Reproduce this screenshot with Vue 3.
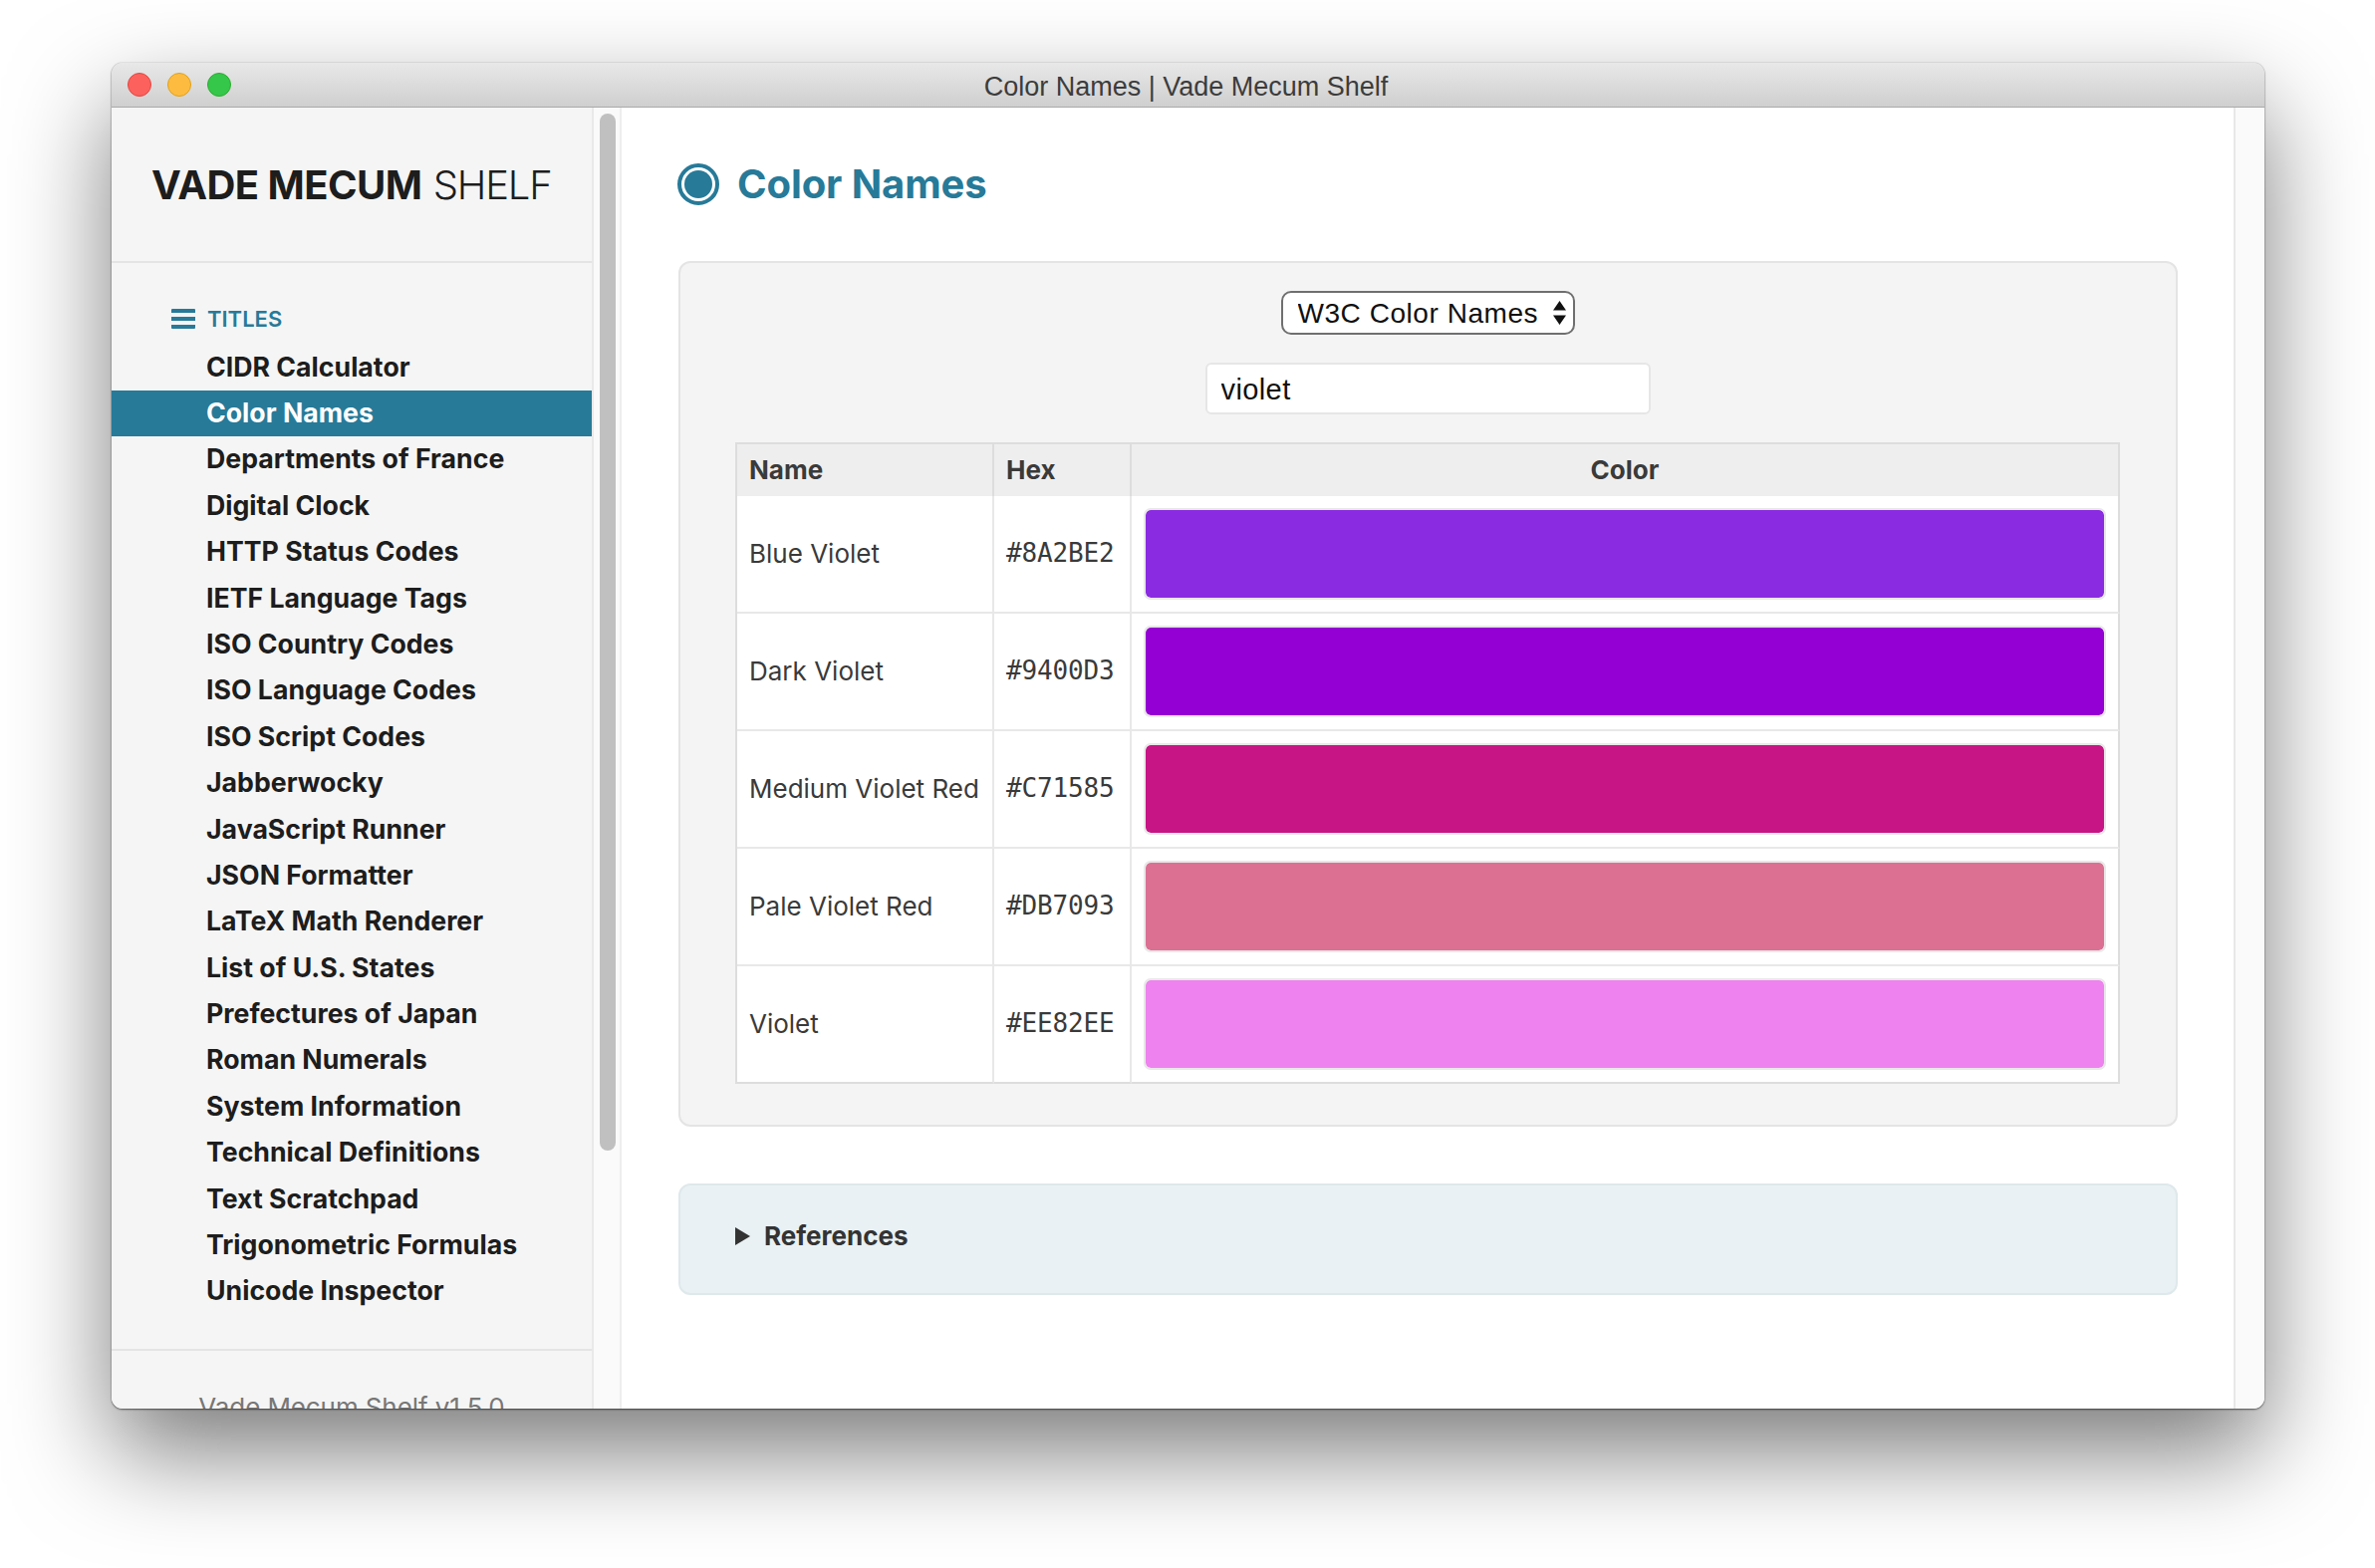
<script setup>
const titles = ['CIDR Calculator','Color Names','Departments of France','Digital Clock','HTTP Status Codes','IETF Language Tags','ISO Country Codes','ISO Language Codes','ISO Script Codes','Jabberwocky','JavaScript Runner','JSON Formatter','LaTeX Math Renderer','List of U.S. States','Prefectures of Japan','Roman Numerals','System Information','Technical Definitions','Text Scratchpad','Trigonometric Formulas','Unicode Inspector']
const colors = [
  { name: 'Blue Violet', hex: '#8A2BE2' },
  { name: 'Dark Violet', hex: '#9400D3' },
  { name: 'Medium Violet Red', hex: '#C71585' },
  { name: 'Pale Violet Red', hex: '#DB7093' },
  { name: 'Violet', hex: '#EE82EE' }
]
</script>

<template>
  <div class="page">
    <div class="window">
      <header class="titlebar">
        <div class="lights">
          <span class="light red"></span>
          <span class="light yellow"></span>
          <span class="light green"></span>
        </div>
        <div class="wintitle">Color Names | Vade Mecum Shelf</div>
      </header>
      <div class="body">
        <aside class="sidebar">
          <div class="logo"><b>VADE MECUM</b> <span>SHELF</span></div>
          <nav class="nav">
            <div class="navhead">
              <svg class="menuicon" width="24" height="20" viewBox="0 0 24 20"><path d="M0 1a1 1 0 0 1 1-1h22a1 1 0 0 1 1 1v3H0zM0 8h24v4H0zM0 16h24v3a1 1 0 0 1-1 1H1a1 1 0 0 1-1-1z" fill="#277a98"/></svg>
              <span>TITLES</span>
            </div>
            <a v-for="t in titles" :key="t" class="navitem" :class="{ active: t === 'Color Names' }">{{ t }}</a>
          </nav>
          <div class="sidefoot">Vade Mecum Shelf v1.5.0</div>
        </aside>
        <div class="gutter"><div class="thumb"></div></div>
        <main class="main">
          <h1 class="heading">
            <span class="radio"><span class="dot"></span></span>
            Color Names
          </h1>
          <section class="panel">
            <div class="selectwrap">
              <select class="select"><option>W3C Color Names</option></select>
              <svg class="arrows" width="13" height="24" viewBox="0 0 13 24"><path d="M6.5 0l6.5 9.5H0zM6.5 24L0 14.5h13z" fill="#111"/></svg>
            </div>
            <input class="search" value="violet" />
            <table class="table">
              <colgroup><col class="c1" /><col class="c2" /><col /></colgroup>
              <thead>
                <tr><th>Name</th><th>Hex</th><th class="center">Color</th></tr>
              </thead>
              <tbody>
                <tr v-for="c in colors" :key="c.hex">
                  <td>{{ c.name }}</td>
                  <td class="mono">{{ c.hex }}</td>
                  <td class="swatchcell"><div class="swatch" :style="{ backgroundColor: c.hex }"></div></td>
                </tr>
              </tbody>
            </table>
          </section>
          <section class="refs">
            <span class="tri"></span>
            <span class="refstext">References</span>
          </section>
        </main>
        <div class="rightgutter"></div>
      </div>
    </div>
  </div>
</template>

<style>
html, body { margin: 0; background: #fff; overflow: hidden; }
</style>

<style scoped>
.page {
  width: 2384px;
  height: 1574px;
  padding: 63px 111px 160px 112px;
  box-sizing: border-box;
  background: #fff;
  overflow: hidden;
}
.window {
  height: 1351px;
  display: flex;
  flex-direction: column;
  border-radius: 11px;
  overflow: hidden;
  background: #fff;
  box-shadow: 0 44px 100px rgba(0,0,0,.52), 0 1px 2px rgba(0,0,0,.55), 0 0 1px rgba(0,0,0,.45);
  font-family: Inter, "Liberation Sans", sans-serif;
}
.titlebar {
  flex: none;
  height: 45px;
  box-sizing: border-box;
  display: flex;
  align-items: center;
  position: relative;
  background: linear-gradient(#e8e8e8, #cfcfcf);
  border-bottom: 1px solid #a9a9a9;
}
.lights { display: flex; gap: 16px; padding-left: 16px; }
.light { width: 24px; height: 24px; border-radius: 50%; box-sizing: border-box; }
.red { background: #fc615d; border: 1px solid #e2463f; }
.yellow { background: #fdbc40; border: 1px solid #e1a116; }
.green { background: #34c749; border: 1px solid #2dac2f; }
.wintitle {
  position: absolute;
  left: 0; right: 4px; top: 0; bottom: 0;
  display: flex; align-items: center; justify-content: center;
  font: 27px "Liberation Sans", sans-serif;
  color: #3c3c3c;
  padding-top: 4px;
  box-sizing: border-box;
}
.body { flex: 1; display: flex; min-height: 0; }
.sidebar {
  flex: none;
  width: 484px;
  box-sizing: border-box;
  background: #f5f5f5;
  border-right: 2px solid #e9e9e9;
  overflow: hidden;
}
.logo {
  height: 156px;
  box-sizing: border-box;
  border-bottom: 2px solid #e4e4e4;
  padding-left: 40px;
  padding-top: 50px;
  font-size: 40px;
  line-height: 56px;
  color: #1d1d1d;
  white-space: nowrap;
}
.logo b { font-weight: 700; letter-spacing: -.55px; }
.logo span { font-weight: 300; letter-spacing: -1.2px; }
.nav { padding: 33px 0 34px; border-bottom: 2px solid #e4e4e4; }
.navhead {
  height: 48.6px;
  box-sizing: border-box;
  padding-left: 60px;
  padding-bottom: 2px;
  display: flex;
  align-items: center;
  gap: 12px;
  font-size: 22px;
  font-weight: 600;
  color: #277a98;
}
.navitem {
  display: block;
  height: 46.4px;
  line-height: 44px;
  padding-left: 95px;
  font-size: 26.7px;
  font-weight: 650;
  color: #1d1d1d;
}
.navitem.active { background: #277a98; color: #fff; }
.sidefoot {
  padding-top: 40px;
  text-align: center;
  font-size: 26px;
  letter-spacing: -.1px;
  line-height: 33px;
  color: #777;
  white-space: nowrap;
}
.gutter {
  flex: none;
  width: 28px;
  box-sizing: border-box;
  background: #fafafa;
  border-right: 2px solid #eee;
  padding: 6px 0 0 6px;
}
.thumb { width: 16px; height: 1041px; border-radius: 8px; background: #c0c0c0; }
.main {
  flex: 1;
  min-width: 0;
  box-sizing: border-box;
  padding: 0 56px 0 57px;
  background: #fff;
}
.heading {
  margin: 0 0 0 -1px;
  height: 154px;
  box-sizing: border-box;
  padding-top: 56px;
  display: flex;
  align-items: flex-start;
  gap: 18px;
  font-size: 40px;
  line-height: 42px;
  font-weight: 650;
  letter-spacing: -.1px;
  color: #277a98;
}
.radio {
  width: 42px; height: 42px;
  box-sizing: border-box;
  border: 4px solid #277a98;
  border-radius: 50%;
  display: flex; align-items: center; justify-content: center;
}
.dot { width: 28px; height: 28px; border-radius: 50%; background: #277a98; }
.panel {
  box-sizing: border-box;
  height: 869px;
  background: #f4f4f4;
  border: 2px solid #e4e4e4;
  border-radius: 12px;
  padding: 28px 56px 0 55px;
  display: flex;
  flex-direction: column;
  align-items: center;
}
.selectwrap { position: relative; width: 295px; height: 44px; flex: none; }
.select {
  appearance: none;
  -webkit-appearance: none;
  display: block;
  width: 100%;
  height: 100%;
  box-sizing: border-box;
  background: #fff;
  border: 2px solid #6f6f6f;
  border-radius: 10px;
  padding: 0 0 0 15px;
  font: 28px "Liberation Sans", sans-serif;
  letter-spacing: .55px;
  color: #111;
  outline: none;
}
.arrows { position: absolute; right: 9px; top: 10px; }
.search {
  flex: none;
  margin-top: 28px;
  width: 447px;
  height: 52px;
  box-sizing: border-box;
  background: #fff;
  border: 2px solid #e6e6e6;
  border-radius: 6px;
  padding: 3px 14px 0;
  font: 29px "Liberation Sans", sans-serif;
  letter-spacing: .4px;
  color: #111;
  outline: none;
}
.table {
  margin-top: 28px;
  width: 1390px;
  flex: none;
  border-collapse: separate;
  border-spacing: 0;
  table-layout: fixed;
  background: #fff;
  border: 2px solid #ddd;
  border-bottom: none;
  border-right: none;
  color: #3a3a3a;
  font-size: 26px;
}
.c1 { width: 258px; }
.c2 { width: 138px; }
th, td {
  border-right: 2px solid #e8e8e8;
  border-bottom: 2px solid #e8e8e8;
  padding: 0 0 2px 12px;
  text-align: left;
  box-sizing: border-box;
  white-space: nowrap;
}
th {
  height: 52px;
  background: #eee;
  border-bottom: none;
  border-right-color: #ddd;
  font-size: 26px;
  font-weight: 650;
}
th.center { text-align: center; padding: 0 0 2px; }
td { height: 118px; }
tr:last-child td { border-bottom-color: #ddd; height: 118px; }
th:last-child, td:last-child { border-right-color: #ddd; }
.mono { font-family: "DejaVu Sans Mono", monospace; font-size: 26px; letter-spacing: -.15px; }
td.swatchcell { padding: 0 12px; }
.swatch {
  height: 92px;
  box-sizing: border-box;
  border: 2px solid #e8e8e8;
  background-clip: padding-box;
  border-radius: 7px;
}
.refs {
  margin-top: 57px;
  height: 112px;
  box-sizing: border-box;
  background: #e9f1f4;
  border: 2px solid #dfe8eb;
  border-radius: 12px;
  padding: 0 0 7px 55px;
  display: flex;
  align-items: center;
  gap: 14px;
}
.tri {
  width: 0; height: 0;
  border-left: 15px solid #333;
  border-top: 9px solid transparent;
  border-bottom: 9px solid transparent;
}
.refstext { font-size: 26px; font-weight: 650; color: #333; }
.rightgutter {
  flex: none;
  width: 31px;
  box-sizing: border-box;
  background: #fafafa;
  border-left: 2px solid #e8e8e8;
}
</style>
